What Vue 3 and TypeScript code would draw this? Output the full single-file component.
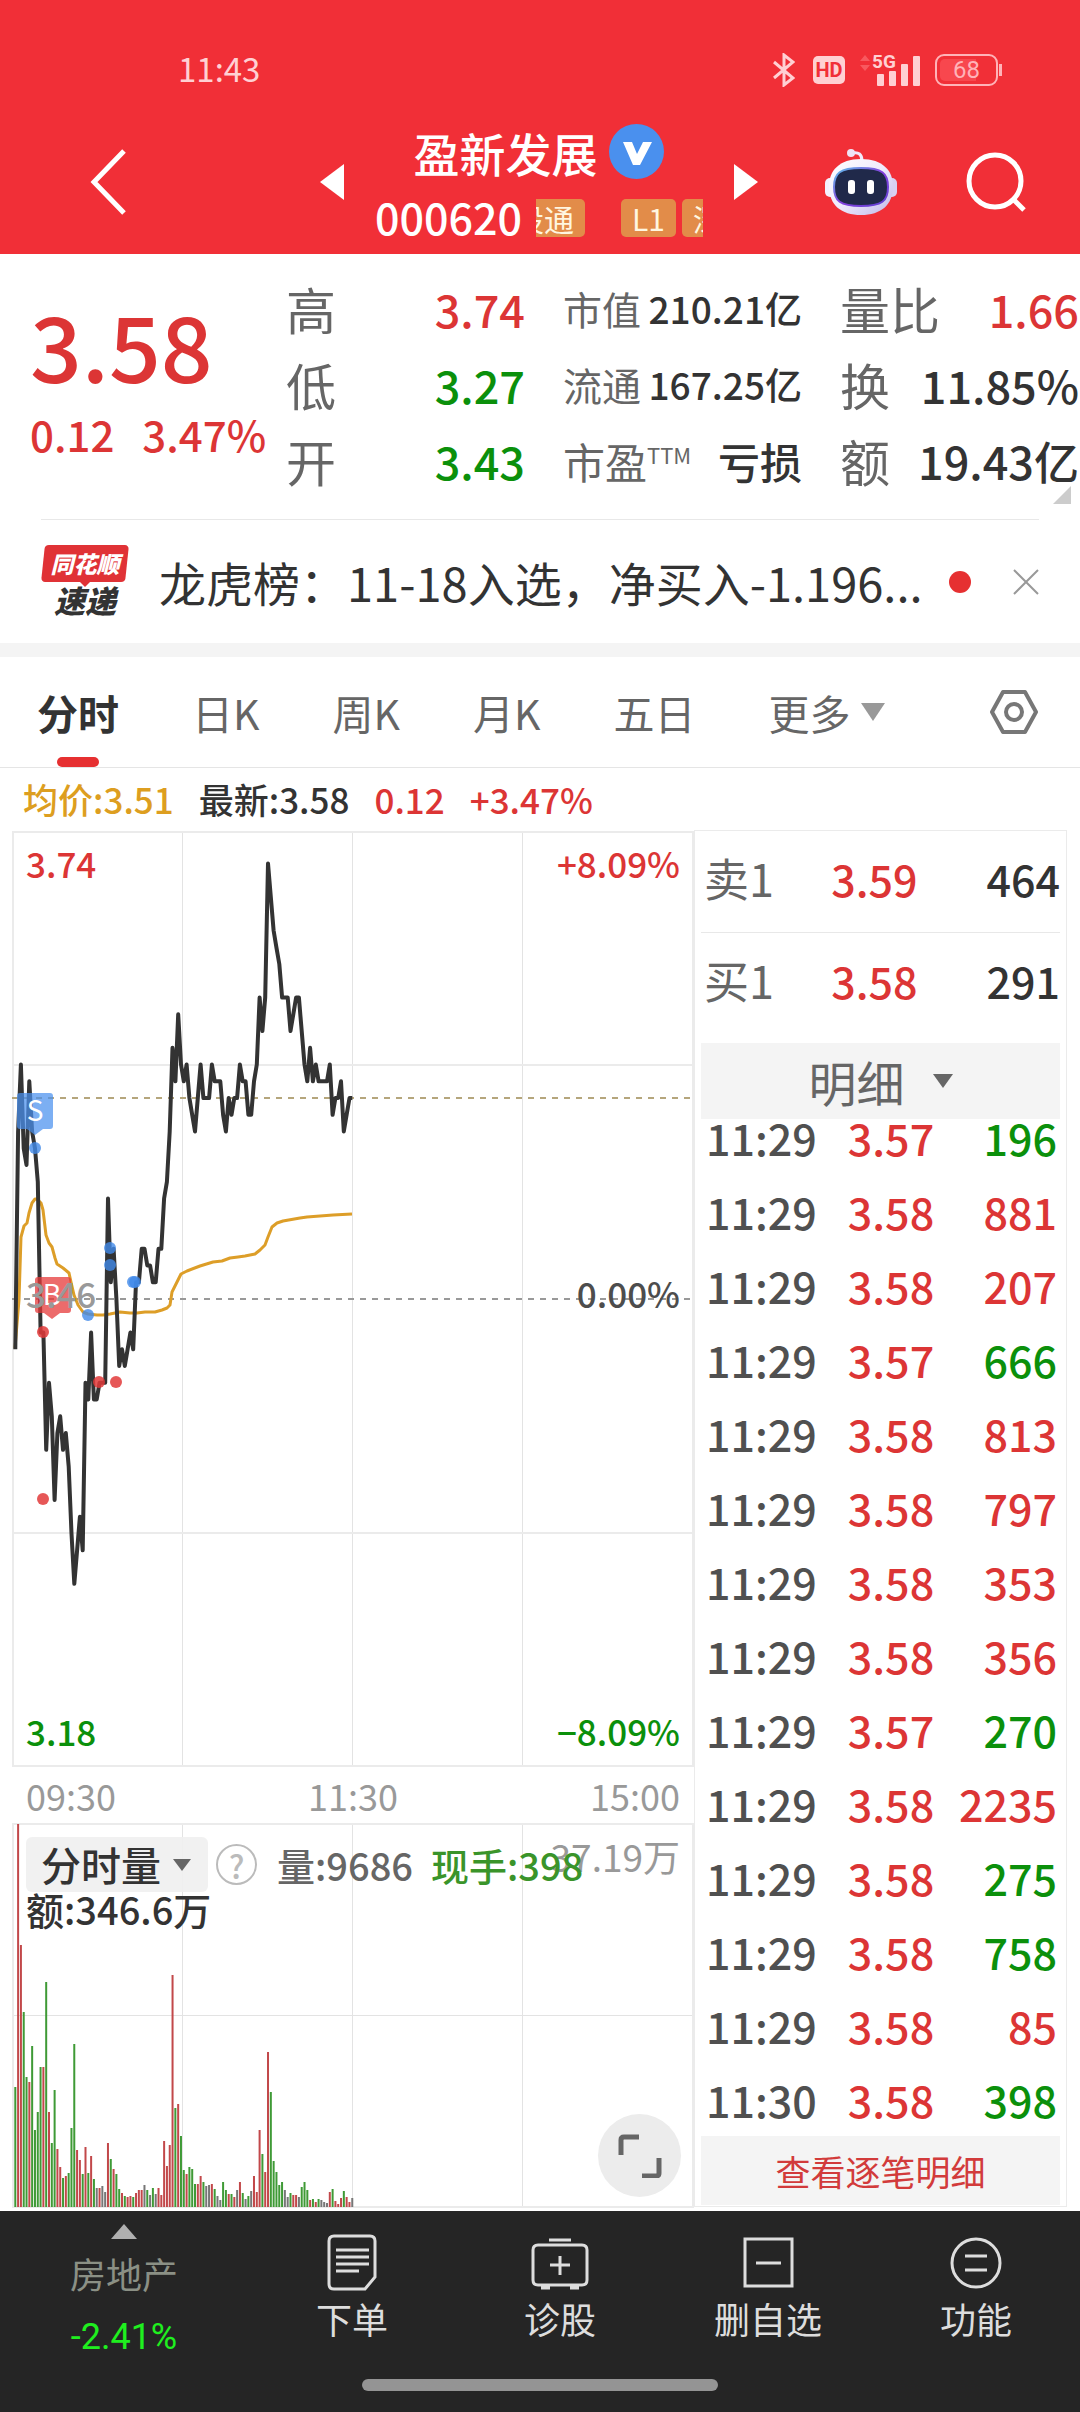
<script setup lang="ts">
type Tone = 'up' | 'down' | 'plain'

interface Metric {
  label: string
  note?: string
  value: string
  tone: Tone
}

interface Trade {
  time: string
  price: string
  volume: string
  tone: Tone
}

const metricColumns: { size: string; items: Metric[] }[] = [
  {
    size: 'large',
    items: [
      { label: '高', value: '3.74', tone: 'up' },
      { label: '低', value: '3.27', tone: 'down' },
      { label: '开', value: '3.43', tone: 'down' },
    ],
  },
  {
    size: 'small',
    items: [
      { label: '市值', value: '210.21亿', tone: 'plain' },
      { label: '流通', value: '167.25亿', tone: 'plain' },
      { label: '市盈', note: 'TTM', value: '亏损', tone: 'plain' },
    ],
  },
  {
    size: 'large',
    items: [
      { label: '量比', value: '1.66', tone: 'up' },
      { label: '换', value: '11.85%', tone: 'plain' },
      { label: '额', value: '19.43亿', tone: 'plain' },
    ],
  },
]

const tabs = ['分时', '日K', '周K', '月K', '五日']

const trades: Trade[] = [
  { time: '11:29', price: '3.57', volume: '196', tone: 'down' },
  { time: '11:29', price: '3.58', volume: '881', tone: 'up' },
  { time: '11:29', price: '3.58', volume: '207', tone: 'up' },
  { time: '11:29', price: '3.57', volume: '666', tone: 'down' },
  { time: '11:29', price: '3.58', volume: '813', tone: 'up' },
  { time: '11:29', price: '3.58', volume: '797', tone: 'up' },
  { time: '11:29', price: '3.58', volume: '353', tone: 'up' },
  { time: '11:29', price: '3.58', volume: '356', tone: 'up' },
  { time: '11:29', price: '3.57', volume: '270', tone: 'down' },
  { time: '11:29', price: '3.58', volume: '2235', tone: 'up' },
  { time: '11:29', price: '3.58', volume: '275', tone: 'down' },
  { time: '11:29', price: '3.58', volume: '758', tone: 'down' },
  { time: '11:29', price: '3.58', volume: '85', tone: 'up' },
  { time: '11:30', price: '3.58', volume: '398', tone: 'down' },
]

// Price of every minute from 09:30 to 11:30, in cents
const prices: number[] = [
  343, 356, 360, 355, 354, 359, 356, 355, 353, 344, 344, 337, 341, 339, 334, 338, 339, 337, 338, 336,
  332, 329, 331, 333, 331, 341, 340, 344, 340, 340, 341, 341, 341, 352, 347, 349, 346, 342, 343, 342,
  343, 344, 343, 347, 347, 349, 349, 348, 348, 347, 347, 349, 349, 352, 353, 356, 361, 359, 363, 360,
  359, 360, 358, 357, 356, 358, 360, 358, 358, 358, 360, 359, 359, 359, 357, 356, 358, 357, 358, 358,
  360, 359, 359, 357, 357, 359, 360, 364, 362, 364, 372, 370, 368, 367, 366, 364, 364, 364, 362, 363,
  364, 364, 362, 360, 359, 361, 359, 360, 359, 359, 359, 359, 360, 357, 358, 358, 359, 356, 357, 358,
  358,
]

const minuteX = (i: number): number => 3.3 + i * 2.808
const priceY = (cents: number): number => 268 + (358 - cents) * 16.75
const pricePoints = prices.map((p, i) => `${minuteX(i).toFixed(1)},${priceY(p).toFixed(1)}`).join(' ')

const averagePoints =
  '3,518 7,470 9,407 12,396 15,393 17,383 20,373 23,369 25,369 29,373 31,380 34,405 37,413 40,417 43,428 45,434 51,438 57,443 59,452 62,465 66,475 71,482 76,484 85,485 91,485 98,484 108,482 118,483 125,483 133,482 143,482 150,480 155,478 158,475 160,462 165,452 169,444 175,441 188,436 201,432 210,431 218,428 226,427 233,426 243,424 248,420 253,415 256,407 260,397 265,393 271,391 288,388 295,387 321,385 340,384'

const sellDots: [number, number][] = [[23, 318], [98, 418], [98, 435], [121, 452], [123, 452], [76, 485]]
const buyDots: [number, number][] = [[31, 502], [87, 552], [104, 552], [31, 669]]

// Volume bars: g falling, r rising, n unchanged
const volumeSeries =
  'g120 r383 r262 g195 g130 r125 g161 g77 g95 g140 r140 g225 r95 g64 g117 r58 r40 g29 r31 g34 ' +
  'g79 g163 r57 r47 g33 r60 g34 r51 g28 n19 r19 n21 n15 r64 g48 r38 g33 g18 r14 g11 ' +
  'r10 r11 g10 r14 r17 r17 n22 g17 n12 g19 n13 r19 r12 r66 r41 r62 r232 g99 r103 g71 ' +
  'g37 r33 g40 g38 g23 r23 r31 g25 n21 n22 r23 g18 n11 n7 g25 g17 r13 g13 r10 n17 ' +
  'r25 g14 n8 g11 n16 r31 r15 r77 g53 r35 r155 g115 g46 g35 g22 g25 n17 n10 g14 r12 ' +
  'r12 n10 g20 g25 g17 r7 g8 r5 g8 n7 n5 n4 r15 g18 r6 r3 r9 g16 r10 r5 n9'

const barFill: Record<string, string> = { g: '#3f9a36', r: '#c2484a', n: '#777777' }
const bars = volumeSeries.split(' ').map((entry, i) => {
  const height = Number(entry.slice(1))
  return { x: minuteX(i) - 1, y: 384 - height, height, fill: barFill[entry[0]] }
})
</script>

<template>
  <div class="app">
    <header class="header">
      <div class="status">
        <span class="clock">11:43</span>
        <div class="status-icons">
          <svg class="bluetooth" width="22" height="34" viewBox="0 0 22 34" aria-hidden="true">
            <path d="M1 9 L20 25 L11 32 V2 L20 9 L1 25" fill="none" stroke="#ffd0d3" stroke-width="3" />
          </svg>
          <span class="hd">HD</span>
          <span class="signal">
            <svg width="62" height="34" viewBox="0 0 62 34" aria-hidden="true">
              <path d="M1 8 L6 2 L11 8Z M1 12 L6 18 L11 12Z" fill="#f8595f" />
              <g fill="#ffd0d3">
                <rect x="18" y="21" width="7" height="12" rx="1" />
                <rect x="30" y="18" width="7" height="15" rx="1" />
                <rect x="42" y="11" width="7" height="22" rx="1" />
                <rect x="54" y="3" width="7" height="30" rx="1" />
              </g>
            </svg>
            <span class="network">5G</span>
          </span>
          <span class="battery"><span class="battery-level">68</span></span>
        </div>
      </div>

      <div class="title-bar">
        <button class="icon-button" aria-label="返回">
          <svg width="36" height="66" viewBox="0 0 36 66">
            <path d="M34 2 L4 33 L34 64" fill="none" stroke="#fff" stroke-width="5" />
          </svg>
        </button>
        <div class="switcher">
          <button class="icon-button" aria-label="上一只">
            <svg width="24" height="36" viewBox="0 0 24 36"><path d="M24 0 V36 L0 18Z" fill="#fff" /></svg>
          </button>
          <div class="stock">
            <h1 class="name">
              盈新发展
              <svg width="55" height="55" viewBox="0 0 55 55" aria-hidden="true">
                <circle cx="27.500" cy="27.500" r="27.500" fill="#4a90ee" />
                <path d="M14 18 H23 L28 30 L34 18 H43 L31 41 H24Z" fill="#fff" />
              </svg>
            </h1>
            <div class="code-row">
              <span class="code">000620</span>
              <div class="marquee">
                <div class="marquee-track">
                  <span class="tag">深股通</span>
                  <span class="tag second-run">L1</span>
                  <span class="tag">深股通</span>
                </div>
              </div>
            </div>
          </div>
          <button class="icon-button" aria-label="下一只">
            <svg width="24" height="36" viewBox="0 0 24 36"><path d="M0 0 V36 L24 18Z" fill="#fff" /></svg>
          </button>
        </div>
        <div class="tools">
          <button class="icon-button" aria-label="智能助手">
            <svg width="72" height="68" viewBox="0 0 72 68">
              <defs>
                <linearGradient id="shell" x1="0" y1="0" x2="1" y2="1">
                  <stop offset="0" stop-color="#ffffff" />
                  <stop offset="0.500" stop-color="#efeafc" />
                  <stop offset="1" stop-color="#bfb8ea" />
                </linearGradient>
                <linearGradient id="rim" x1="0" y1="0" x2="1" y2="1">
                  <stop offset="0" stop-color="#5fc3ea" />
                  <stop offset="0.500" stop-color="#8440dd" />
                  <stop offset="1" stop-color="#5d3fd0" />
                </linearGradient>
              </defs>
              <path d="M27 5 Q37 3 37 13" fill="none" stroke="#f1e9fb" stroke-width="3" />
              <circle cx="26" cy="5" r="4" fill="#efe3f5" />
              <rect x="0" y="30" width="12" height="19" rx="5" fill="#f4f0fd" />
              <rect x="60" y="30" width="12" height="19" rx="5" fill="#d8d1f2" />
              <path d="M36 11 C58 11 68 23 68 38 C68 57 56 67 36 67 C16 67 4 57 4 38 C4 23 14 11 36 11Z" fill="url(#shell)" />
              <path d="M36 20 C57 20 63 25 63 39 C63 53 57 58 36 58 C15 58 9 53 9 39 C9 25 15 20 36 20Z" fill="#20294a" stroke="url(#rim)" stroke-width="2" />
              <rect x="23" y="32" width="7" height="14" rx="3" fill="#fff" />
              <rect x="42" y="32" width="7" height="14" rx="3" fill="#fff" />
            </svg>
          </button>
          <button class="icon-button" aria-label="搜索">
            <svg width="60" height="60" viewBox="0 0 60 60">
              <circle cx="29" cy="29" r="26" fill="none" stroke="#fff" stroke-width="5" />
              <path d="M47 47 L58 58" stroke="#fff" stroke-width="5" />
            </svg>
          </button>
        </div>
      </div>
    </header>

    <section class="quote">
      <div class="quote-main">
        <div class="last up">3.58</div>
        <div class="change up"><span>0.12</span><span>3.47%</span></div>
      </div>
      <dl v-for="(column, c) in metricColumns" :key="c" class="metrics" :class="column.size">
        <div v-for="item in column.items" :key="item.label" class="metric" :class="{ noted: item.note }">
          <dt>{{ item.label }}<sup v-if="item.note">{{ item.note }}</sup></dt>
          <dd :class="item.tone">{{ item.value }}</dd>
        </div>
      </dl>
      <span class="corner"></span>
    </section>

    <section class="news">
      <div class="news-logo">
        <span class="news-brand">同花顺</span>
        <span class="news-kind">速递</span>
      </div>
      <a class="news-text" href="#">龙虎榜：11-18入选，净买入-1.196...</a>
      <span class="news-dot"></span>
      <button class="icon-button" aria-label="关闭">
        <svg width="26" height="26" viewBox="0 0 26 26"><path d="M1 1 L25 25 M25 1 L1 25" stroke="#999" stroke-width="2" /></svg>
      </button>
    </section>

    <nav class="tabs">
      <button v-for="(tab, i) in tabs" :key="tab" class="tab" :class="{ active: i === 0 }">{{ tab }}</button>
      <button class="tab more">
        更多
        <svg width="24" height="18" viewBox="0 0 24 18" aria-hidden="true"><path d="M0 0 H24 L12 18Z" fill="#999" /></svg>
      </button>
      <button class="icon-button settings" aria-label="设置">
        <svg width="50" height="46" viewBox="0 0 50 46">
          <path d="M14 3 H36 L47 23 L36 43 H14 L3 23Z" fill="none" stroke="#777" stroke-width="4" stroke-linejoin="round" />
          <circle cx="25" cy="23" r="8" fill="none" stroke="#777" stroke-width="4" />
        </svg>
      </button>
    </nav>

    <div class="legend">
      <span class="average">均价:3.51</span>
      <span>最新:3.58</span>
      <span class="up">0.12</span>
      <span class="up">+3.47%</span>
    </div>

    <main class="board">
      <div class="charts">
        <div class="chart">
          <svg class="plot" viewBox="0 0 682 937" aria-hidden="true">
            <g stroke="#e3e3e3" stroke-width="1">
              <path d="M170.500 2 V936 M340.500 2 V936 M510.500 2 V936" />
            </g>
            <g stroke="#ebebeb" stroke-width="2" fill="none">
              <path d="M1 235 H681 M1 703 H681" />
              <rect x="1" y="2" width="680" height="934" />
            </g>
            <path d="M0 268 H680" stroke="#b5a67c" stroke-width="2" stroke-dasharray="6 6" />
            <path d="M0 469 H680" stroke="#999" stroke-width="2" stroke-dasharray="6 6" />
            <polyline :points="averagePoints" fill="none" stroke="#dd9e28" stroke-width="3" stroke-linejoin="round" />
            <polyline :points="pricePoints" fill="none" stroke="#333" stroke-width="4" stroke-linejoin="round" />
            <g fill="#4189e8" fill-opacity="0.8">
              <circle v-for="(dot, i) in sellDots" :key="i" :cx="dot[0]" :cy="dot[1]" r="6" />
            </g>
            <g fill="#e23a3a" fill-opacity="0.85">
              <circle v-for="(dot, i) in buyDots" :key="i" :cx="dot[0]" :cy="dot[1]" r="6" />
            </g>
            <path d="M8 263 H38 Q41 263 41 266 V296 Q41 299 38 299 H31 L23 305 L15 299 H8 Q5 299 5 296 V266 Q5 263 8 263Z" fill="#4a90ee" fill-opacity="0.72" />
            <text class="flag" x="23" y="291">S</text>
            <path d="M26 447 H56 Q59 447 59 450 V480 Q59 483 56 483 H48 L40 489 L32 483 H26 Q23 483 23 480 V450 Q23 447 26 447Z" fill="#e63a3a" fill-opacity="0.75" />
            <text class="flag" x="40" y="475">B</text>
          </svg>
          <span class="mark top left up">3.74</span>
          <span class="mark top right up">+8.09%</span>
          <span class="mark middle left faint">3.46</span>
          <span class="mark middle right">0.00%</span>
          <span class="mark bottom left down">3.18</span>
          <span class="mark bottom right down">−8.09%</span>
        </div>

        <div class="times"><span>09:30</span><span>11:30</span><span>15:00</span></div>

        <div class="chart">
          <svg class="plot" viewBox="0 0 682 385" aria-hidden="true">
            <g stroke="#e3e3e3" stroke-width="1">
              <path d="M170.500 1 V384 M340.500 1 V384 M510.500 1 V384 M1 192.500 H681" />
            </g>
            <rect x="1" y="1" width="680" height="383" fill="none" stroke="#ebebeb" stroke-width="2" />
            <rect v-for="(bar, i) in bars" :key="i" :x="bar.x" :y="bar.y" width="2" :height="bar.height" :fill="bar.fill" />
          </svg>
          <span class="mark scale faint">37.19万</span>
          <div class="volume-info">
            <div class="volume-line">
              <button class="indicator">
                分时量
                <svg width="18" height="12" viewBox="0 0 18 12" aria-hidden="true"><path d="M0 0 H18 L9 12Z" fill="#666" /></svg>
              </button>
              <button class="help" aria-label="说明">?</button>
              <span class="muted">量:9686</span>
              <span class="current">现手:398</span>
            </div>
            <div class="amount">额:346.6万</div>
          </div>
          <button class="expand" aria-label="全屏">
            <svg width="44" height="44" viewBox="0 0 44 44">
              <path d="M3 21 V6 Q3 3 6 3 H21 M41 24 V39 Q41 42 38 42 H24" fill="none" stroke="#666" stroke-width="5" />
            </svg>
          </button>
        </div>
      </div>

      <aside class="panel">
        <table class="depth">
          <tbody>
            <tr><th scope="row">卖1</th><td class="up">3.59</td><td>464</td></tr>
            <tr><th scope="row">买1</th><td class="up">3.58</td><td>291</td></tr>
          </tbody>
        </table>
        <button class="detail">
          明细
          <svg width="20" height="14" viewBox="0 0 20 14" aria-hidden="true"><path d="M0 0 H20 L10 14Z" fill="#666" /></svg>
        </button>
        <table class="trades">
          <tbody>
            <tr v-for="(trade, i) in trades" :key="i">
              <td class="time">{{ trade.time }}</td>
              <td class="up">{{ trade.price }}</td>
              <td :class="trade.tone">{{ trade.volume }}</td>
            </tr>
          </tbody>
        </table>
        <a class="all-trades" href="#">查看逐笔明细</a>
      </aside>
    </main>

    <footer class="footer">
      <nav class="actions">
        <a class="sector" href="#">
          <svg width="26" height="15" viewBox="0 0 26 15" aria-hidden="true"><path d="M13 0 L26 15 H0Z" fill="#b0b0b0" /></svg>
          <span class="sector-name">房地产</span>
          <span class="sector-change">-2.41%</span>
        </a>
        <button class="action">
          <svg width="60" height="60" viewBox="0 0 60 60" aria-hidden="true">
            <path d="M12 4 H48 Q53 4 53 9 V45 L43 57 H12 Q7 57 7 52 V9 Q7 4 12 4Z M14 18 H47 M14 25 H47 M14 32 H47 M14 39 H37" />
          </svg>
          下单
        </button>
        <button class="action">
          <svg width="60" height="60" viewBox="0 0 60 60" aria-hidden="true">
            <path d="M8 13 H52 Q57 13 57 18 V48 Q57 53 52 53 H8 Q3 53 3 48 V18 Q3 13 8 13Z M19 8 H41 M30 24 V43 M20 33 H40 M11 56 H20 M40 56 H49" />
          </svg>
          诊股
        </button>
        <button class="action">
          <svg width="60" height="60" viewBox="0 0 60 60" aria-hidden="true">
            <path d="M7 7 H54 V54 H7Z M18 31 H43" />
          </svg>
          删自选
        </button>
        <button class="action">
          <svg width="60" height="60" viewBox="0 0 60 60" aria-hidden="true">
            <circle cx="30" cy="31" r="24" />
            <path d="M19 24 H41 M19 38 H41" />
          </svg>
          功能
        </button>
      </nav>
      <div class="home-bar"></div>
    </footer>
  </div>
</template>

<style>
body {
  margin: 0;
  background: #fff;
}
</style>

<style scoped>
.app {
  font-family: "Noto Sans CJK SC", "Noto Sans", sans-serif;
  font-weight: 400;
  color: #333;
  overflow: hidden;
}

button {
  font: inherit;
  color: inherit;
  background: none;
  border: 0;
  padding: 0;
}

a {
  color: inherit;
  text-decoration: none;
}

svg {
  display: block;
  flex: none;
}

.up {
  color: #dc3535;
}

.down {
  color: #0b900b;
}

.faint {
  color: #999;
}

/* Header */
.header {
  background: #f12f37;
  color: #fff;
}

.status {
  display: flex;
  align-items: center;
  justify-content: space-between;
  height: 80px;
  padding: 30px 77px 0 178px;
  color: #ffd0d3;
}

.clock {
  padding-bottom: 5px;
  font-size: 33px;
  line-height: 40px;
}

.status-icons {
  display: flex;
  align-items: center;
}

.hd {
  margin: 0 14px 0 18px;
  width: 32px;
  height: 28px;
  border-radius: 5px;
  background: #ffd0d3;
  color: #f12f37;
  font: 700 20px/28px "Roboto", sans-serif;
  text-align: center;
}

.signal {
  position: relative;
}

.network {
  position: absolute;
  left: 13px;
  top: -1px;
  font: 700 19px/20px "Roboto", sans-serif;
}

.battery {
  position: relative;
  margin-left: 14px;
  margin-right: 5px;
  border: 2px solid #ffb3b8;
  border-radius: 9px;
  padding: 3px;
}

.battery::after {
  content: "";
  position: absolute;
  right: -6px;
  top: 8px;
  width: 3px;
  height: 12px;
  background: #ffb3b8;
}

.battery-level {
  display: block;
  width: 53px;
  border-radius: 5px;
  background: linear-gradient(90deg, #f8474e 68%, transparent 68%);
  color: #ffb3b8;
  font: 400 24px/22px "Roboto", sans-serif;
  text-align: center;
}

.title-bar {
  display: flex;
  align-items: center;
  padding: 0 54px 0 90px;
  height: 144px;
}

.icon-button {
  display: flex;
}

.switcher {
  flex: 1;
  display: flex;
  align-items: center;
  justify-content: flex-end;
  gap: 31px;
}

.stock {
  display: flex;
  flex-direction: column;
  align-items: center;
}

.name {
  display: flex;
  align-items: center;
  gap: 12px;
  margin: 0;
  padding-top: 9px;
  height: 58px;
  font-size: 46px;
  font-weight: 500;
  line-height: 58px;
}

.code-row {
  display: flex;
  align-items: center;
  gap: 14px;
  height: 70px;
}

.code {
  font-size: 43px;
  font-weight: 500;
  line-height: 60px;
}

.marquee {
  width: 167px;
  overflow: hidden;
}

.marquee-track {
  display: flex;
  gap: 6px;
  margin-left: -63px;
  padding-top: 4px;
}

.tag {
  flex: none;
  padding: 0 11px;
  border-radius: 5px;
  background: #e28c49;
  color: #fff6e0;
  font-size: 30px;
  line-height: 38px;
}

.second-run {
  margin-left: 30px;
}

.tools {
  display: flex;
  align-items: center;
  gap: 69px;
  margin-left: 67px;
}

/* Quote */
.quote {
  position: relative;
  display: grid;
  grid-template-columns: 218px repeat(3, 1fr);
  gap: 38px;
  padding: 16px 1px 21px 30px;
}

.quote-main {
  display: flex;
  flex-direction: column;
  gap: 6px;
  padding-top: 18px;
  white-space: nowrap;
}

.last {
  font-size: 91px;
  font-weight: 500;
  line-height: 110px;
}

.change {
  display: flex;
  gap: 28px;
  font-size: 42px;
  font-weight: 500;
  line-height: 60px;
}

.metrics {
  margin: 0;
}

.metric {
  display: flex;
  align-items: center;
  justify-content: space-between;
  height: 76px;
  white-space: nowrap;
}

dt {
  color: #666;
}

dd {
  margin: 0;
  font-weight: 500;
}

.large dt {
  font-size: 50px;
}

.large dd {
  font-size: 45px;
}

.small dt {
  font-size: 39px;
}

.small dd {
  font-size: 37px;
}

.small .noted dt,
.small .noted dd {
  font-size: 42px;
}

sup {
  font-size: 22px;
  line-height: 22px;
}

.corner {
  position: absolute;
  right: 9px;
  bottom: 15px;
  border-left: 18px solid transparent;
  border-bottom: 18px solid #ccc;
}

/* News */
.news {
  display: flex;
  align-items: center;
  height: 123px;
  margin: 0 41px;
  border-top: 1px solid #e8e8e8;
}

.news-logo {
  display: flex;
  flex-direction: column;
  align-items: center;
  width: 88px;
  font-style: italic;
  font-weight: 900;
}

.news-brand {
  position: relative;
  z-index: 0;
  width: 84px;
  color: #fff;
  font-size: 23px;
  line-height: 37px;
  text-align: center;
}

.news-brand::before {
  content: "";
  position: absolute;
  inset: 0;
  z-index: -1;
  border-radius: 4px;
  background: #e03236;
  transform: skewX(-6deg);
}

.news-brand::after {
  content: "";
  position: absolute;
  left: 36px;
  top: 36px;
  border: 6px solid transparent;
  border-top-color: #e03236;
}

.news-kind {
  font-size: 31px;
  line-height: 36px;
}

.news-text {
  flex: 1;
  margin-left: 30px;
  font-size: 47px;
  line-height: 64px;
  white-space: nowrap;
}

.news-dot {
  width: 22px;
  height: 22px;
  margin-right: 42px;
  border-radius: 50%;
  background: #e63031;
}

/* Tabs */
.tabs {
  display: flex;
  align-items: stretch;
  gap: 73px;
  height: 110px;
  padding: 0 41px 0 37px;
  border-top: 14px solid #f4f4f4;
  border-bottom: 1px solid #e5e5e5;
}

.tab {
  position: relative;
  display: flex;
  align-items: center;
  gap: 10px;
  color: #666;
  font-size: 41px;
  line-height: 60px;
  white-space: nowrap;
}

.active {
  color: #333;
  font-weight: 700;
}

.active::after {
  content: "";
  position: absolute;
  left: 50%;
  bottom: 0;
  width: 42px;
  height: 10px;
  margin-left: -21px;
  border-radius: 5px;
  background: #e63031;
}

.settings {
  align-items: center;
  margin-left: auto;
}

.legend {
  display: flex;
  gap: 25px;
  padding-left: 23px;
  font-size: 35px;
  font-weight: 500;
  line-height: 62px;
}

.average {
  color: #dd9e20;
}

/* Charts */
.board {
  display: grid;
  grid-template-columns: 682fr 373fr;
  align-items: start;
  padding: 0 13px 3px 12px;
}

.chart {
  position: relative;
}

.plot {
  width: 100%;
  height: auto;
}

.flag {
  fill: #fff;
  font-size: 28px;
  text-anchor: middle;
}

.mark {
  position: absolute;
  font-size: 35px;
  font-weight: 500;
  line-height: 40px;
  color: #4d4d4d;
}

.mark.up {
  color: #dc3535;
}

.mark.down {
  color: #0b900b;
}

.mark.faint {
  color: #999;
}

.left {
  left: 14px;
}

.right {
  right: 14px;
}

.top {
  top: 13px;
}

.middle {
  top: 50%;
  margin-top: -26px;
}

.bottom {
  bottom: 16px;
}

.times {
  display: flex;
  justify-content: space-between;
  padding: 0 14px;
  color: #999;
  font-size: 36px;
  line-height: 56px;
}

.mark.scale {
  top: 13px;
  right: 14px;
  font-size: 37px;
  font-weight: 400;
}

.volume-info {
  position: absolute;
  top: 14px;
  left: 14px;
  font-size: 38px;
  font-weight: 500;
  white-space: nowrap;
}

.volume-line {
  display: flex;
  align-items: center;
  line-height: 55px;
}

.indicator {
  display: flex;
  align-items: center;
  gap: 12px;
  padding: 0 17px 0 15px;
  border-radius: 6px;
  background: rgba(240, 240, 240, 0.9);
  font-size: 40px;
}

.help {
  width: 41px;
  height: 41px;
  margin: 0 20px 0 8px;
  border: 2px solid #bbb;
  border-radius: 50%;
  color: #bbb;
  font-size: 32px;
  line-height: 34px;
}

.muted {
  color: #666;
}

.current {
  margin-left: 18px;
  color: #3a942a;
}

.amount {
  line-height: 34px;
}

.expand {
  position: absolute;
  right: 13px;
  bottom: 11px;
  display: flex;
  align-items: center;
  justify-content: center;
  width: 83px;
  height: 83px;
  border-radius: 50%;
  background: #ececec;
}

/* Order panel */
.panel {
  padding: 0 6px 1px;
  border: 1px solid #ebebeb;
}

table {
  width: 100%;
  border-collapse: collapse;
  table-layout: fixed;
  font-size: 43px;
  font-weight: 500;
}

th,
td {
  padding: 0;
  text-align: right;
  white-space: nowrap;
}

.depth th {
  width: 35%;
  padding-left: 3px;
  color: #666;
  font-size: 45px;
  font-weight: 400;
  text-align: left;
}

.depth td {
  width: 25%;
}

.depth td:last-child {
  width: 40%;
}

.depth th,
.depth td {
  height: 93px;
  padding-bottom: 8px;
}

.depth tr:first-child {
  border-bottom: 1px solid #e8e8e8;
}

.detail {
  display: flex;
  align-items: center;
  justify-content: center;
  gap: 28px;
  width: 100%;
  height: 76px;
  margin-top: 9px;
  background: #f4f4f4;
  color: #666;
  font-size: 48px;
}

.trades {
  margin-top: -19px;
}

.trades td {
  width: 25%;
  height: 74px;
}

.trades .time {
  width: 40%;
  padding-left: 5px;
  color: #505050;
  text-align: left;
}

.trades td:last-child {
  width: 35%;
  padding-right: 3px;
}

.all-trades {
  display: block;
  background: #f4f4f4;
  color: #d23b3b;
  font-size: 35px;
  line-height: 69px;
  text-align: center;
}

/* Footer */
.footer {
  padding-bottom: 21px;
  background: #252525;
}

.actions {
  display: grid;
  grid-template-columns: 31fr repeat(4, 26fr);
  height: 168px;
}

.sector {
  display: flex;
  flex-direction: column;
  align-items: center;
  padding-top: 13px;
}

.sector-name {
  margin-top: 8px;
  color: #8b9085;
  font-size: 36px;
  line-height: 52px;
}

.sector-change {
  margin-top: 14px;
  color: #1fef1f;
  font: 400 36px/48px "Roboto", sans-serif;
}

.action {
  display: flex;
  flex-direction: column;
  align-items: center;
  padding-top: 21px;
  color: #ddd;
  font-size: 36px;
  line-height: 52px;
}

.action svg {
  fill: none;
  stroke: #ddd;
  stroke-width: 3px;
}

.home-bar {
  width: 33%;
  height: 12px;
  margin: 0 auto;
  border-radius: 6px;
  background: #949494;
}
</style>
